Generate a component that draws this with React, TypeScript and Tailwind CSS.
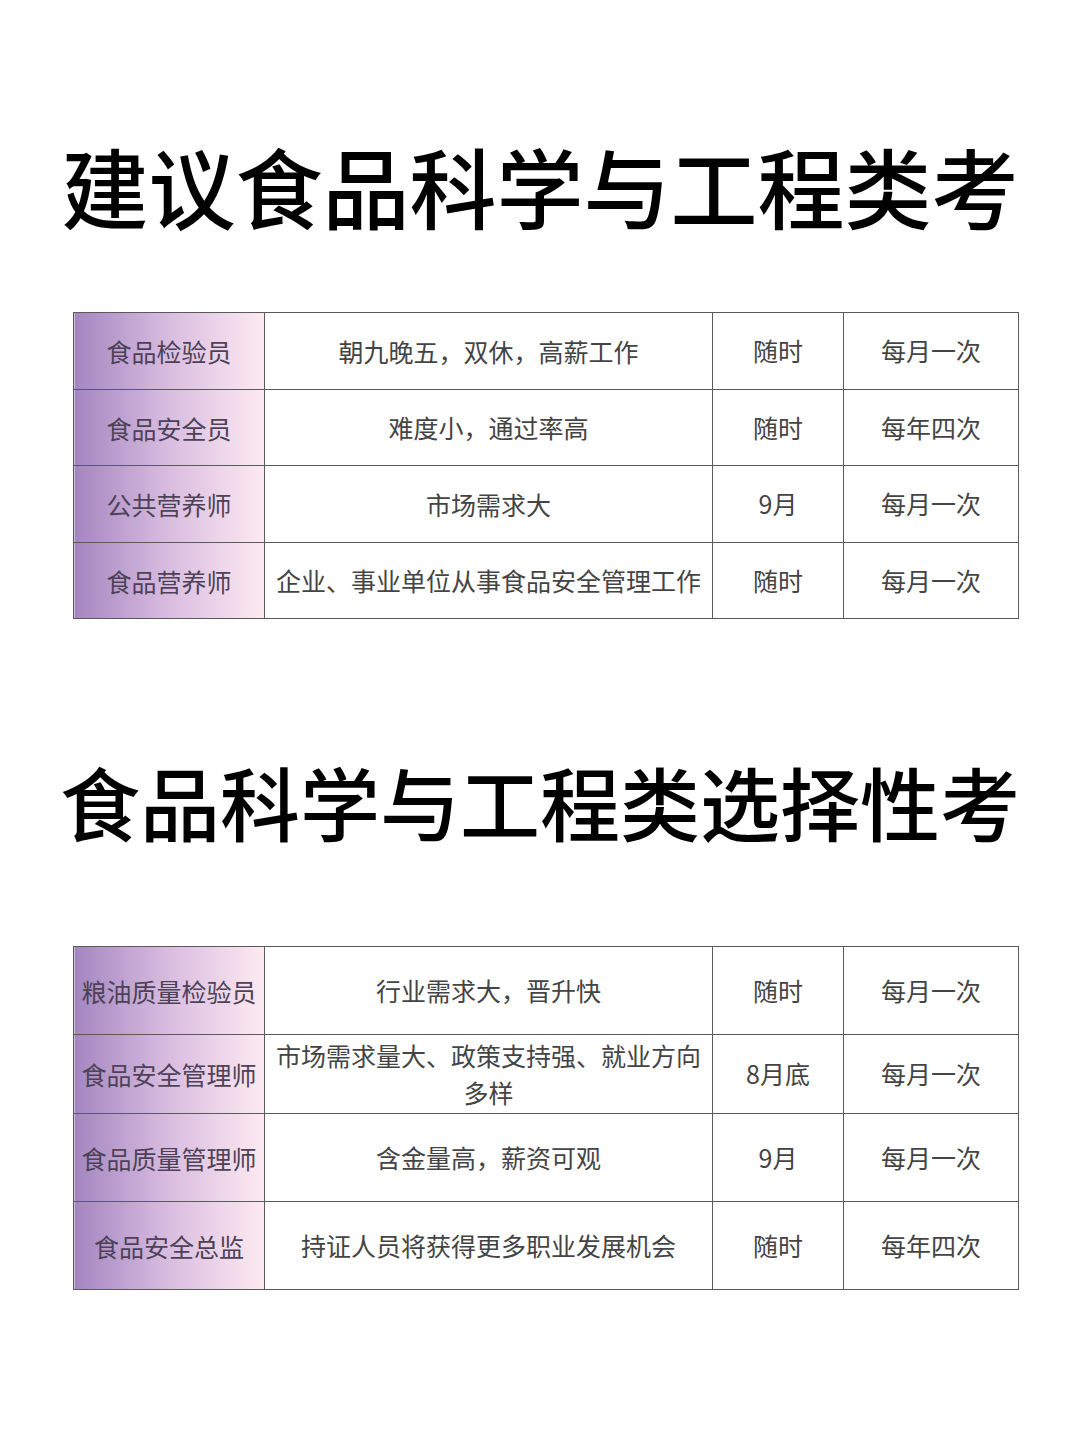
const FONT = { fontFamily: '"Noto Sans CJK SC", "Noto Sans", sans-serif' };

type Row = { name: string; desc: string; time: string; freq: string; h: string };

const TABLE_ONE: Row[] = [
  { name: "食品检验员", desc: "朝九晚五，双休，高薪工作", time: "随时", freq: "每月一次", h: "h-[77px]" },
  { name: "食品安全员", desc: "难度小，通过率高", time: "随时", freq: "每年四次", h: "h-[76px]" },
  { name: "公共营养师", desc: "市场需求大", time: "9月", freq: "每月一次", h: "h-[77px]" },
  { name: "食品营养师", desc: "企业、事业单位从事食品安全管理工作", time: "随时", freq: "每月一次", h: "h-[76px]" },
];

const TABLE_TWO: Row[] = [
  { name: "粮油质量检验员", desc: "行业需求大，晋升快", time: "随时", freq: "每月一次", h: "h-[88px]" },
  { name: "食品安全管理师", desc: "市场需求量大、政策支持强、就业方向多样", time: "8月底", freq: "每月一次", h: "h-[79px]" },
  { name: "食品质量管理师", desc: "含金量高，薪资可观", time: "9月", freq: "每月一次", h: "h-[88px]" },
  { name: "食品安全总监", desc: "持证人员将获得更多职业发展机会", time: "随时", freq: "每年四次", h: "h-[88px]" },
];

function InfoTable({ rows }: { rows: Row[] }) {
  return (
    <table className="w-[945px] ml-[73px] border-collapse table-fixed">
      <colgroup>
        <col className="w-[191px]" />
        <col className="w-[448px]" />
        <col className="w-[131px]" />
        <col className="w-[175px]" />
      </colgroup>
      <tbody>
        {rows.map((r) => (
          <tr key={r.name} className={r.h}>
            <td className="border-[1.5px] border-[#5a5a5a] bg-gradient-to-r from-[#a486c0] via-[#d9bde0] to-[#fdeaf0] text-center text-[25px] leading-[36px] text-[#4d4257] p-0">
              {r.name}
            </td>
            <td className="border-[1.5px] border-[#5a5a5a] text-center text-[25px] leading-[37px] text-[#444] px-2">
              {r.desc}
            </td>
            <td className="border-[1.5px] border-[#5a5a5a] text-center text-[25px] text-[#444]">{r.time}</td>
            <td className="border-[1.5px] border-[#5a5a5a] text-center text-[25px] text-[#444]">{r.freq}</td>
          </tr>
        ))}
      </tbody>
    </table>
  );
}

export default function App() {
  return (
    <div className="w-[1080px] h-[1440px] bg-white overflow-hidden" style={FONT}>
      <h1 className="pt-[130px] text-center text-[87px] leading-[110px] font-medium text-black">
        建议食品科学与工程类考
      </h1>
      <div className="mt-[72px]">
        <InfoTable rows={TABLE_ONE} />
      </div>
      <h1 className="mt-[131px] text-center text-[80px] leading-[100px] font-medium text-black">
        食品科学与工程类选择性考
      </h1>
      <div className="mt-[96px]">
        <InfoTable rows={TABLE_TWO} />
      </div>
    </div>
  );
}
